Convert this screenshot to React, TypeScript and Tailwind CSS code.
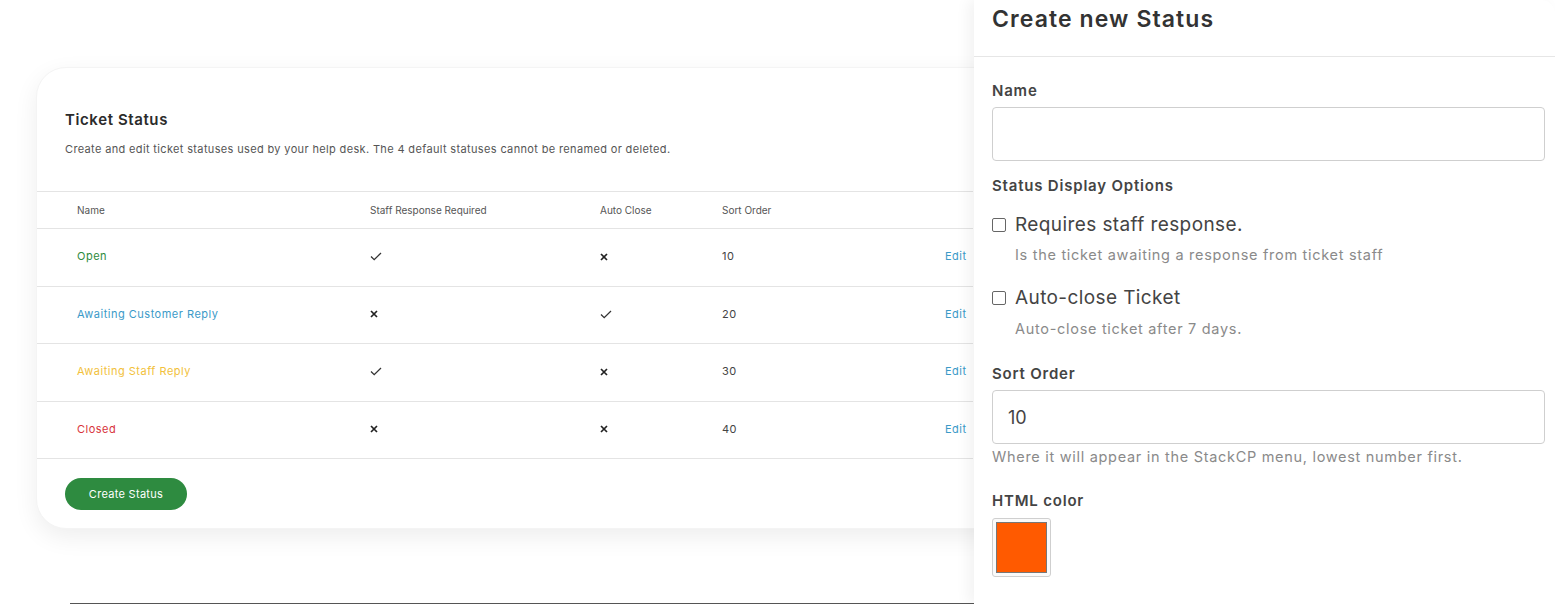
import React from "react";

const font = { fontFamily: "Inter, 'Noto Sans', sans-serif" };

type Row = {
  name: string;
  color: string;
  staff: boolean;
  auto: boolean;
  order: number;
};

const rows: Row[] = [
  { name: "Open", color: "text-[#2e8b3e]", staff: true, auto: false, order: 10 },
  { name: "Awaiting Customer Reply", color: "text-[#3b9ac8]", staff: false, auto: true, order: 20 },
  { name: "Awaiting Staff Reply", color: "text-[#f2c13c]", staff: true, auto: false, order: 30 },
  { name: "Closed", color: "text-[#d8343c]", staff: false, auto: false, order: 40 },
];

function Check() {
  return (
    <svg width="12" height="9" viewBox="0 0 12 9" fill="none">
      <path d="M1 4.5L4.2 7.6L11 1" stroke="#333" strokeWidth="1.3" />
    </svg>
  );
}

function Cross() {
  return (
    <svg width="8" height="8" viewBox="0 0 8 8" fill="none">
      <path d="M1 1L7 7M7 1L1 7" stroke="#222" strokeWidth="1.7" />
    </svg>
  );
}

function Checkbox() {
  return <span className="inline-block w-[14px] h-[14px] rounded-[2px] border border-[#666] bg-white" />;
}

export default function App() {
  return (
    <div className="w-[1555px] h-[604px] flex bg-white overflow-hidden" style={font}>
      {/* Left page content */}
      <div className="w-[974px] shrink-0 flex flex-col">
        <div className="ml-[36px] mt-[67px] mr-[-40px] rounded-[30px] bg-white shadow-[0_8px_24px_rgba(0,0,0,0.07)] border border-[#f4f4f4] pb-[18px]">
          <div className="pl-[28px] pt-[42px]">
            <h2 className="text-[15px] leading-[20px] font-semibold tracking-[0.6px] text-[#2b2b2b]">Ticket Status</h2>
            <p className="mt-[11px] text-[11px] leading-[16px] tracking-[0.35px] text-[#555]">
              Create and edit ticket statuses used by your help desk. The 4 default statuses cannot be renamed or deleted.
            </p>
          </div>

          <div className="mt-[34px] mr-[40px]">
            <div className="grid grid-cols-[293px_230px_122px_223px_1fr] items-center h-[38px] pl-[40px] border-y border-[#e4e4e4] text-[10px] text-[#555]">
              <span>Name</span>
              <span>Staff Response Required</span>
              <span>Auto Close</span>
              <span>Sort Order</span>
              <span />
            </div>
            {rows.map((r, i) => (
              <div
                key={r.name}
                className={`grid grid-cols-[293px_230px_122px_223px_1fr] items-center pl-[40px] pb-[2px] border-b border-[#e4e4e4] text-[11px] tracking-[0.5px] ${
                  i % 2 === 0 ? "h-[58px]" : "h-[57px]"
                }`}
              >
                <span className={r.color}>{r.name}</span>
                <span>{r.staff ? <Check /> : <Cross />}</span>
                <span>{r.auto ? <Check /> : <Cross />}</span>
                <span className="text-[#444]">{r.order}</span>
                <span className="text-[#3b9ac8]">Edit</span>
              </div>
            ))}
          </div>

          <button className="ml-[28px] mt-[19px] w-[122px] h-[32px] rounded-full bg-[#2e8b40] text-white text-[11px] tracking-[0.3px]">
            Create Status
          </button>
        </div>
        <div className="mt-auto ml-[70px] h-px bg-[#555]" />
      </div>

      {/* Right drawer */}
      <div className="relative z-10 flex-1 bg-white rounded-tr-[14px] shadow-[-6px_0_14px_rgba(0,0,0,0.05)]">
        <div className="pl-[18px] pt-[5px] pb-[23px] border-b border-[#e6e6e6]">
          <h1 className="text-[23px] leading-[28px] font-semibold tracking-[1.1px] text-[#333]">Create new Status</h1>
        </div>
        <div className="pl-[18px] pr-[10px]">
          <label className="block mt-[24px] text-[15px] leading-[20px] font-semibold tracking-[0.8px] text-[#444]">Name</label>
          <div className="mt-[6px] h-[54px] rounded-[4px] border border-[#cfcfcf]" />

          <div className="mt-[15px] text-[15px] leading-[20px] font-semibold tracking-[0.8px] text-[#444]">Status Display Options</div>

          <div className="mt-[17px] flex items-center gap-[9px] h-[24px]">
            <Checkbox />
            <span className="text-[19px] leading-[24px] tracking-[0.4px] text-[#444]">Requires staff response.</span>
          </div>
          <div className="mt-[8px] ml-[23px] text-[14.5px] leading-[20px] tracking-[0.7px] text-[#8a8a8a]">
            Is the ticket awaiting a response from ticket staff
          </div>

          <div className="mt-[21px] flex items-center gap-[9px] h-[24px]">
            <Checkbox />
            <span className="text-[19px] leading-[24px] tracking-[0.4px] text-[#444]">Auto-close Ticket</span>
          </div>
          <div className="mt-[9px] ml-[23px] text-[14.5px] leading-[20px] tracking-[0.7px] text-[#8a8a8a]">
            Auto-close ticket after 7 days.
          </div>

          <label className="block mt-[25px] text-[15px] leading-[20px] font-semibold tracking-[0.8px] text-[#444]">Sort Order</label>
          <div className="mt-[6px] h-[54px] rounded-[4px] border border-[#cfcfcf] flex items-center pl-[15px] text-[18px] text-[#444]">
            10
          </div>
          <div className="mt-[3px] text-[14.5px] leading-[20px] tracking-[0.7px] text-[#8a8a8a]">
            Where it will appear in the StackCP menu, lowest number first.
          </div>

          <label className="block mt-[24px] text-[15px] leading-[20px] font-semibold tracking-[0.8px] text-[#444]">HTML color</label>
          <div className="mt-[7px] w-[59px] h-[59px] rounded-[3px] border border-[#cfcfcf] p-[3px] bg-[#fafafa]">
            <div className="w-full h-full bg-[#ff5a00] border border-[#777]" />
          </div>
        </div>
      </div>
    </div>
  );
}
